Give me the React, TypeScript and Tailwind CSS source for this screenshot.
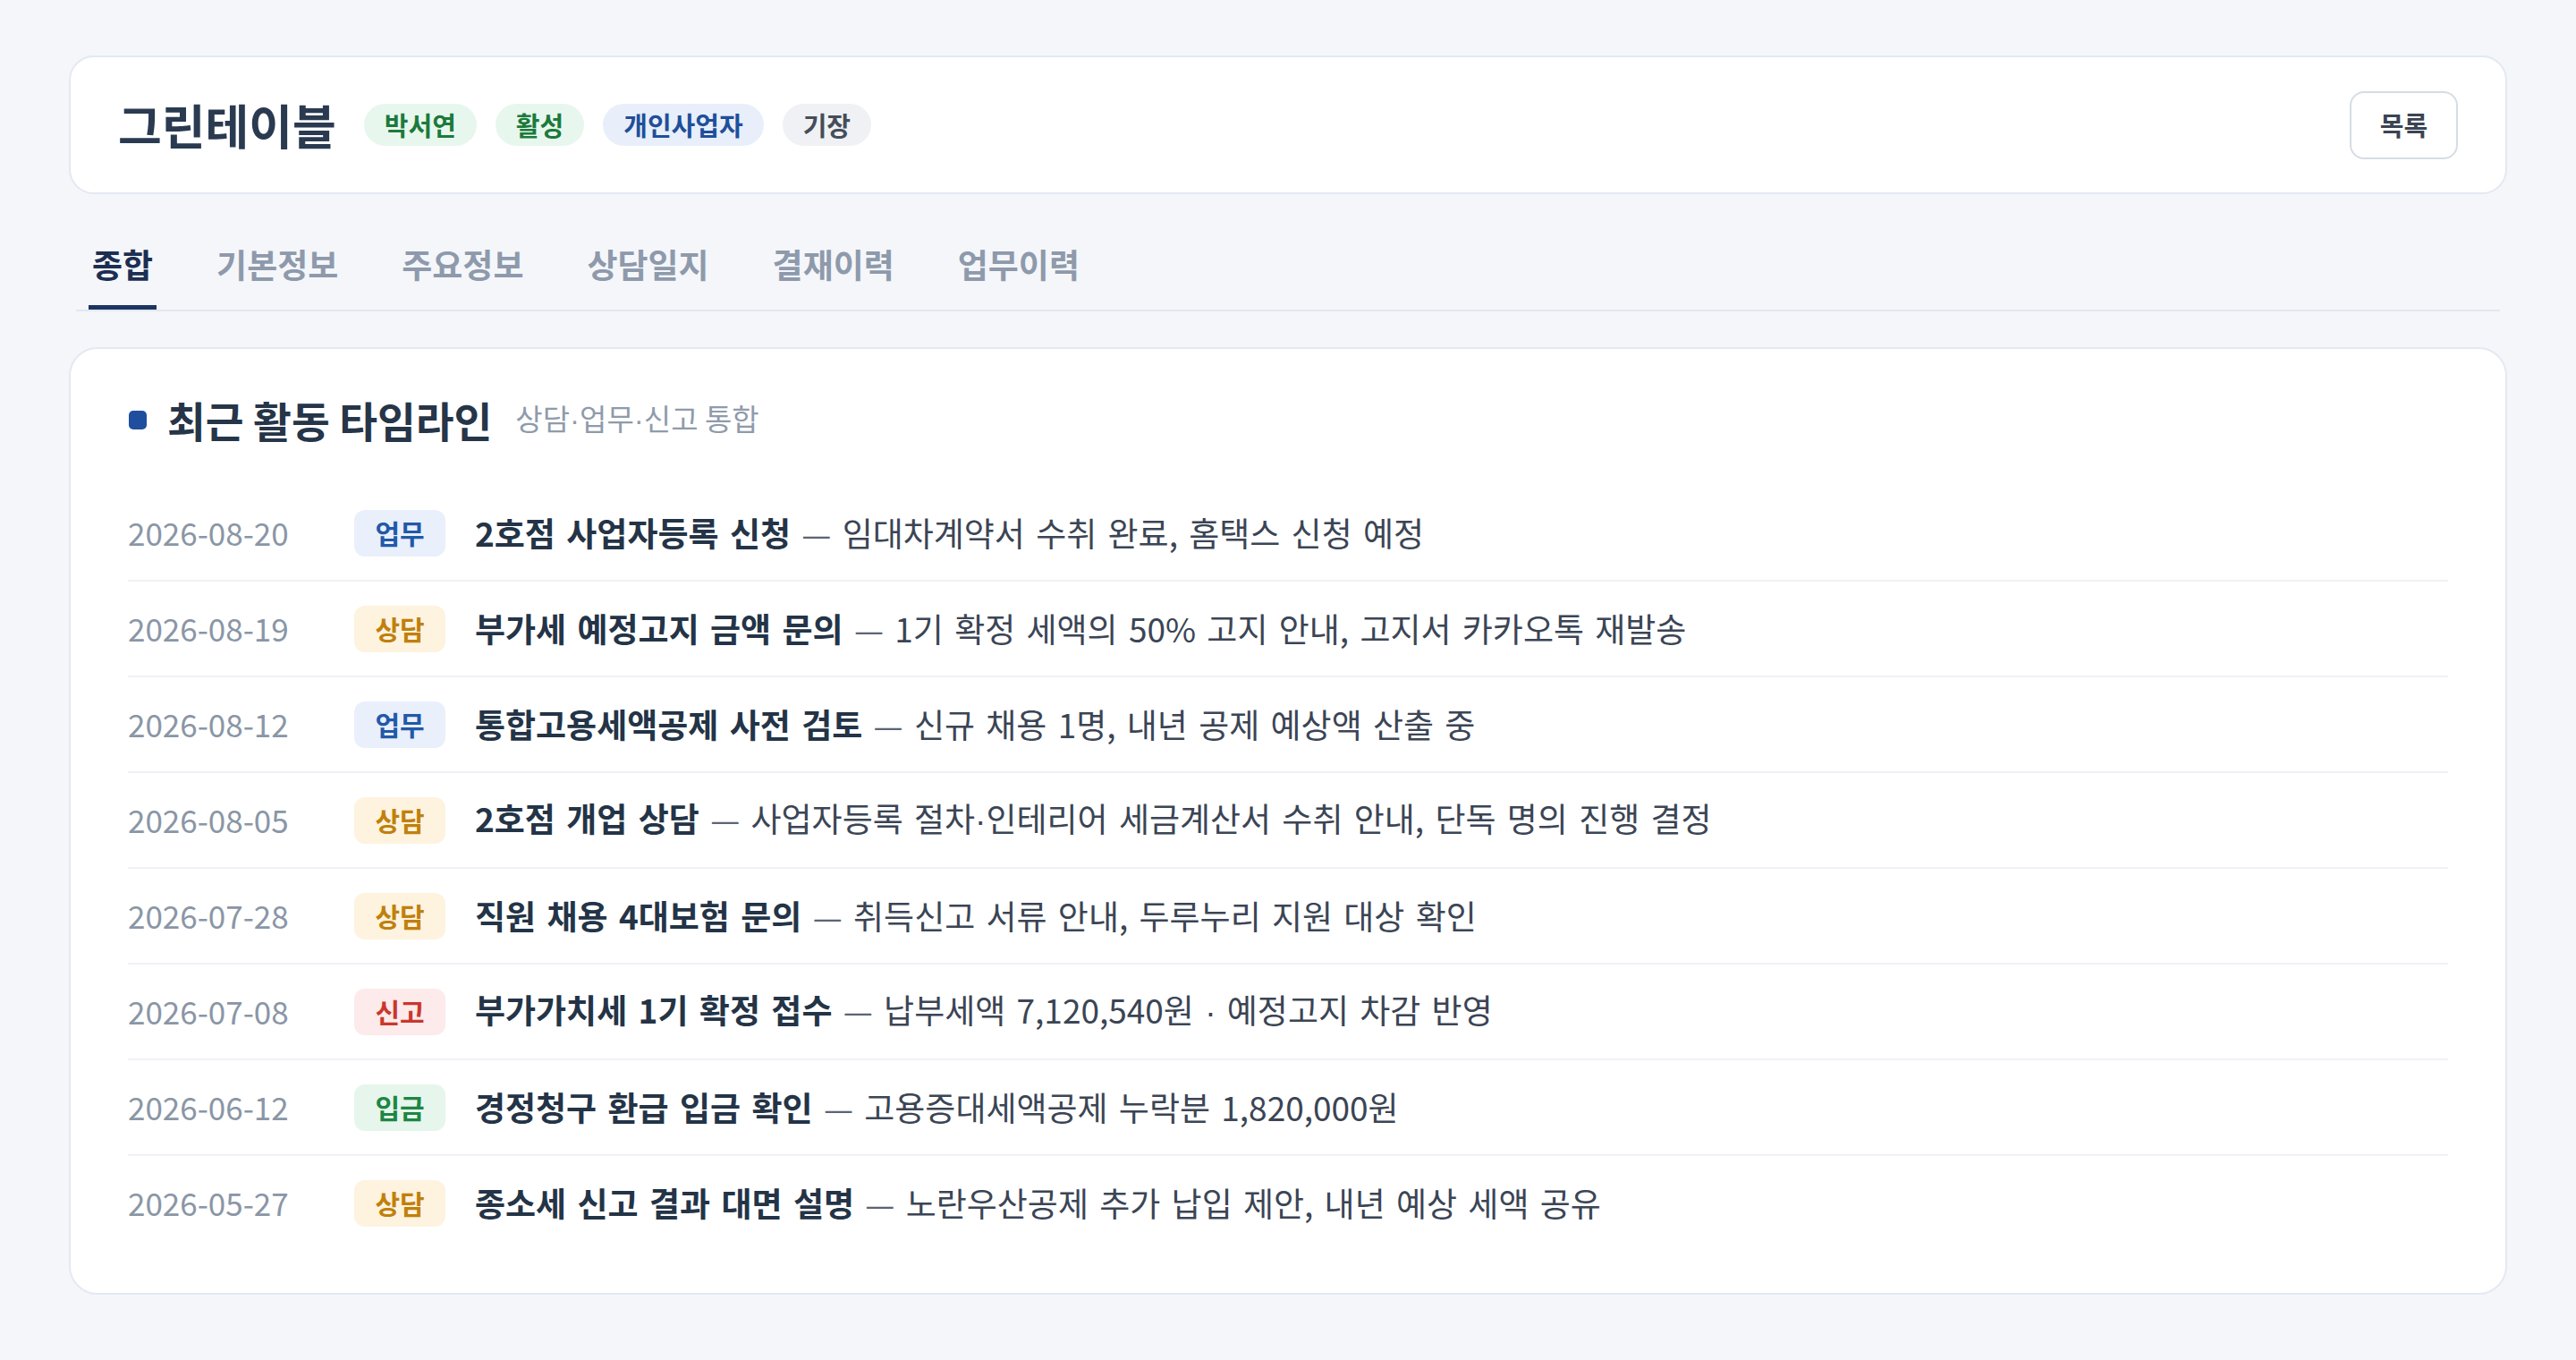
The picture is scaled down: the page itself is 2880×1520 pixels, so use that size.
import React from 'react';

type Kind = '업무' | '상담' | '신고' | '입금';

interface Activity {
  date: string;
  kind: Kind;
  title: string;
  desc: string;
}

const kindStyle: Record<Kind, string> = {
  업무: 'bg-[#e9effb] text-[#2159a8]',
  상담: 'bg-[#fdf3df] text-[#c0800c]',
  신고: 'bg-[#fdeaea] text-[#c8382d]',
  입금: 'bg-[#e6f6ec] text-[#1d8644]',
};

const activities: Activity[] = [
  { date: '2026-08-20', kind: '업무', title: '2호점 사업자등록 신청', desc: '임대차계약서 수취 완료, 홈택스 신청 예정' },
  { date: '2026-08-19', kind: '상담', title: '부가세 예정고지 금액 문의', desc: '1기 확정 세액의 50% 고지 안내, 고지서 카카오톡 재발송' },
  { date: '2026-08-12', kind: '업무', title: '통합고용세액공제 사전 검토', desc: '신규 채용 1명, 내년 공제 예상액 산출 중' },
  { date: '2026-08-05', kind: '상담', title: '2호점 개업 상담', desc: '사업자등록 절차·인테리어 세금계산서 수취 안내, 단독 명의 진행 결정' },
  { date: '2026-07-28', kind: '상담', title: '직원 채용 4대보험 문의', desc: '취득신고 서류 안내, 두루누리 지원 대상 확인' },
  { date: '2026-07-08', kind: '신고', title: '부가가치세 1기 확정 접수', desc: '납부세액 7,120,540원 · 예정고지 차감 반영' },
  { date: '2026-06-12', kind: '입금', title: '경정청구 환급 입금 확인', desc: '고용증대세액공제 누락분 1,820,000원' },
  { date: '2026-05-27', kind: '상담', title: '종소세 신고 결과 대면 설명', desc: '노란우산공제 추가 납입 제안, 내년 예상 세액 공유' },
];

const tabs = ['종합', '기본정보', '주요정보', '상담일지', '결재이력', '업무이력'];

const headerBadges = [
  { label: '박서연', cls: 'bg-[#e8f7ee] text-[#1b7a3c]' },
  { label: '활성', cls: 'bg-[#e8f7ee] text-[#1b7a3c]' },
  { label: '개인사업자', cls: 'bg-[#e8effb] text-[#1f4f9a]' },
  { label: '기장', cls: 'bg-[#eff1f4] text-[#454d59]' },
];

// narrow latin middle dot, like the reference font draws it
const Dot = () => <span style={{ fontFamily: '"Liberation Sans", sans-serif' }}>·</span>;

const withDots = (s: string) =>
  s.split('·').map((part, i) => (
    <React.Fragment key={i}>
      {i > 0 && <Dot />}
      {part}
    </React.Fragment>
  ));

export default function App() {
  return (
    <div
      className="min-h-screen bg-[#f4f6fa] px-[77px] pt-[62px] pb-[60px]"
      style={{ fontFamily: '"Noto Sans CJK KR", "Noto Sans", sans-serif' }}
    >
      {/* Header */}
      <div className="flex h-[155px] items-center justify-between rounded-[28px] border-2 border-[#e3e9f2] bg-white px-[53px]">
        <div className="flex items-center">
          <h1 className="text-[53px] font-bold leading-none text-[#2a3a50]">그린테이블</h1>
          <div className="ml-[31px] flex items-center gap-[21px]">
            {headerBadges.map((b) => (
              <span
                key={b.label}
                className={`flex h-[47px] items-center rounded-full px-[23px] text-[29px] font-semibold ${b.cls}`}
              >
                {b.label}
              </span>
            ))}
          </div>
        </div>
        <button className="flex h-[76px] w-[121px] items-center justify-center rounded-[16px] border-2 border-[#d6dce4] bg-white text-[29px] font-semibold text-[#3b4453]">
          목록
        </button>
      </div>

      {/* Tabs */}
      <nav className="mx-[8px] mt-[53px] flex gap-[63px] border-b-2 border-[#e2e7ee] px-[14px]">
        {tabs.map((t, i) => (
          <div
            key={t}
            className={`border-b-[5px] px-[4px] pb-[20px] text-[37px] font-bold leading-[51px] ${
              i === 0 ? 'border-[#1c3460] text-[#1c2f52]' : 'border-transparent text-[#8e9aab]'
            }`}
          >
            {t}
          </div>
        ))}
      </nav>

      {/* Timeline card */}
      <div className="mt-[40px] rounded-[32px] border-2 border-[#e3e9f2] bg-white px-[64px] pt-[48px] pb-[48px]">
        <div className="flex h-[62px] items-center">
          <span className="ml-[1px] h-[21px] w-[20px] rounded-[5px] bg-[#1f4e9e]" />
          <h2 className="ml-[23px] text-[46.5px] font-bold text-[#263548]">최근 활동 타임라인</h2>
          <span className="ml-[26px] text-[33px] text-[#8f9bab]">{withDots('상담·업무·신고 통합')}</span>
        </div>

        <div className="mt-[43px]">
          {activities.map((a, i) => (
            <div
              key={a.date + a.title}
              className={`flex h-[105px] items-center ${
                i < activities.length - 1 ? 'box-content border-b-2 border-[#eef1f5]' : ''
              }`}
            >
              <span className="w-[253px] shrink-0 text-[35px] text-[#8a96a6]">{a.date}</span>
              <span
                className={`flex h-[52px] w-[102px] shrink-0 items-center justify-center rounded-[12px] text-[30px] font-semibold ${kindStyle[a.kind]}`}
              >
                {a.kind}
              </span>
              <p className="ml-[33px] text-[37px] text-[#3b4555] [word-spacing:4px]">
                <span className="font-bold text-[#243447]">{a.title}</span>
                <span className="text-[#5b6576]"> — </span>
                {withDots(a.desc)}
              </p>
            </div>
          ))}
        </div>
      </div>
    </div>
  );
}
